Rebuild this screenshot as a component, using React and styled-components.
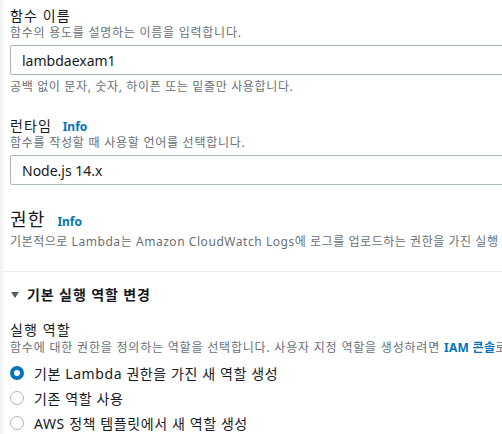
import React from 'react';
import styled, { createGlobalStyle } from 'styled-components';

const GlobalStyle = createGlobalStyle`
  html, body {
    margin: 0;
    padding: 0;
    background: #ffffff;
    overflow: hidden;
  }
  body {
    font-family: "Noto Sans", "Noto Sans CJK KR", sans-serif;
    color: #16191f;
  }
`;

function App() {
  return (
    <>
      <GlobalStyle />
      <Page>
        <Content>
          <Section>
            <Field>
              <Label>함수 이름</Label>
              <Description>함수의 용도를 설명하는 이름을 입력합니다.</Description>
              <Input defaultValue="lambdaexam1" />
              <Hint>공백 없이 문자, 숫자, 하이픈 또는 밑줄만 사용합니다.</Hint>
            </Field>
            <Field $gap={22}>
              <Label>
                런타임 <InfoLink>Info</InfoLink>
              </Label>
              <Description>함수를 작성할 때 사용할 언어를 선택합니다.</Description>
              <Input defaultValue="Node.js 14.x" />
            </Field>
            <Heading>
              권한 <InfoLink>Info</InfoLink>
            </Heading>
            <Description $top={3} $spacing={0.55}>
              기본적으로 Lambda는 Amazon CloudWatch Logs에 로그를 업로드하는 권한을 가진 실행 역할을 생성합니다.
            </Description>
          </Section>
          <Divider />
          <Section>
            <ExpandHeader>
              <Caret viewBox="0 0 8 6" width="8" height="6">
                <path d="M0 0 L8 0 L4 6 Z" fill="#545b64" />
              </Caret>
              기본 실행 역할 변경
            </ExpandHeader>
            <Field $gap={16}>
              <Label>실행 역할</Label>
              <Description $top={1} $spacing={0.8}>
                함수에 대한 권한을 정의하는 역할을 선택합니다. 사용자 지정 역할을 생성하려면 <StrongLink>IAM 콘솔</StrongLink>로 이동하십시오.
              </Description>
              <RadioList>
                <RadioRow>
                  <Radio $checked />
                  기본 Lambda 권한을 가진 새 역할 생성
                </RadioRow>
                <RadioRow>
                  <Radio />
                  기존 역할 사용
                </RadioRow>
                <RadioRow>
                  <Radio />
                  AWS 정책 템플릿에서 새 역할 생성
                </RadioRow>
              </RadioList>
            </Field>
          </Section>
        </Content>
      </Page>
    </>
  );
}

const Page = styled.div`
  display: flex;
  width: 502px;
  height: 434px;
  background: #ffffff;
`;

const Content = styled.div`
  flex: 1;
  min-width: 0;
  border-left: 3px solid #f2f3f3;
  padding-top: 7px;
  overflow: hidden;
`;

const Section = styled.div`
  padding: 0 0 0 7px;
  display: flex;
  flex-direction: column;
`;

const Field = styled.div`
  display: flex;
  flex-direction: column;
  margin-top: ${(p) => p.$gap || 0}px;
`;

const Label = styled.div`
  height: 18px;
  font-size: 14px;
  line-height: 18px;
  letter-spacing: 1.1px;
  color: #16191f;
  white-space: nowrap;
`;

const Heading = styled.div`
  height: 24px;
  font-size: 18px;
  line-height: 24px;
  letter-spacing: 1.2px;
  margin-top: 22px;
  color: #16191f;
  white-space: nowrap;
`;

const InfoLink = styled.span`
  font-size: 12px;
  font-weight: 700;
  letter-spacing: 0;
  color: #0073bb;
  margin-left: 6px;
`;

const StrongLink = styled.span`
  font-weight: 700;
  letter-spacing: 0.3px;
  color: #0073bb;
`;

const Description = styled.div`
  height: 16px;
  font-size: 12px;
  line-height: 16px;
  letter-spacing: ${(p) => p.$spacing ?? 0.75}px;
  color: #687078;
  white-space: nowrap;
  margin-top: ${(p) => p.$top || 0}px;
`;

const Hint = styled(Description)`
  margin-top: 4px;
  letter-spacing: 0.65px;
`;

const Input = styled.input`
  box-sizing: border-box;
  margin: 4px 0 0 0;
  width: 520px;
  height: 30px;
  padding: 0 11px;
  border: 1px solid #aab7b8;
  border-radius: 2px;
  font-family: "Noto Sans", "Noto Sans CJK KR", sans-serif;
  font-size: 14px;
  color: #16191f;
  background: #ffffff;
  outline: none;
`;

const Divider = styled.div`
  height: 1px;
  background: #eaeded;
  margin-top: 21px;
`;

const ExpandHeader = styled.div`
  display: flex;
  align-items: center;
  gap: 8px;
  height: 20px;
  margin-top: 13px;
  font-size: 14px;
  line-height: 20px;
  letter-spacing: 0.9px;
  font-weight: 700;
  color: #16191f;
`;

const Caret = styled.svg`
  display: block;
  margin-left: 1px;
`;

const RadioList = styled.div`
  display: flex;
  flex-direction: column;
  margin-top: 4px;
`;

const RadioRow = styled.label`
  display: flex;
  align-items: center;
  gap: 10px;
  height: 25px;
  font-size: 14px;
  letter-spacing: 0.6px;
  color: #16191f;
  white-space: nowrap;
`;

const Radio = styled.span`
  box-sizing: border-box;
  width: 14px;
  height: 14px;
  border-radius: 50%;
  flex-shrink: 0;
  background: #ffffff;
  border: ${(p) => (p.$checked ? '4px solid #0073bb' : '1.5px solid #aab7b8')};
`;

export default App;
